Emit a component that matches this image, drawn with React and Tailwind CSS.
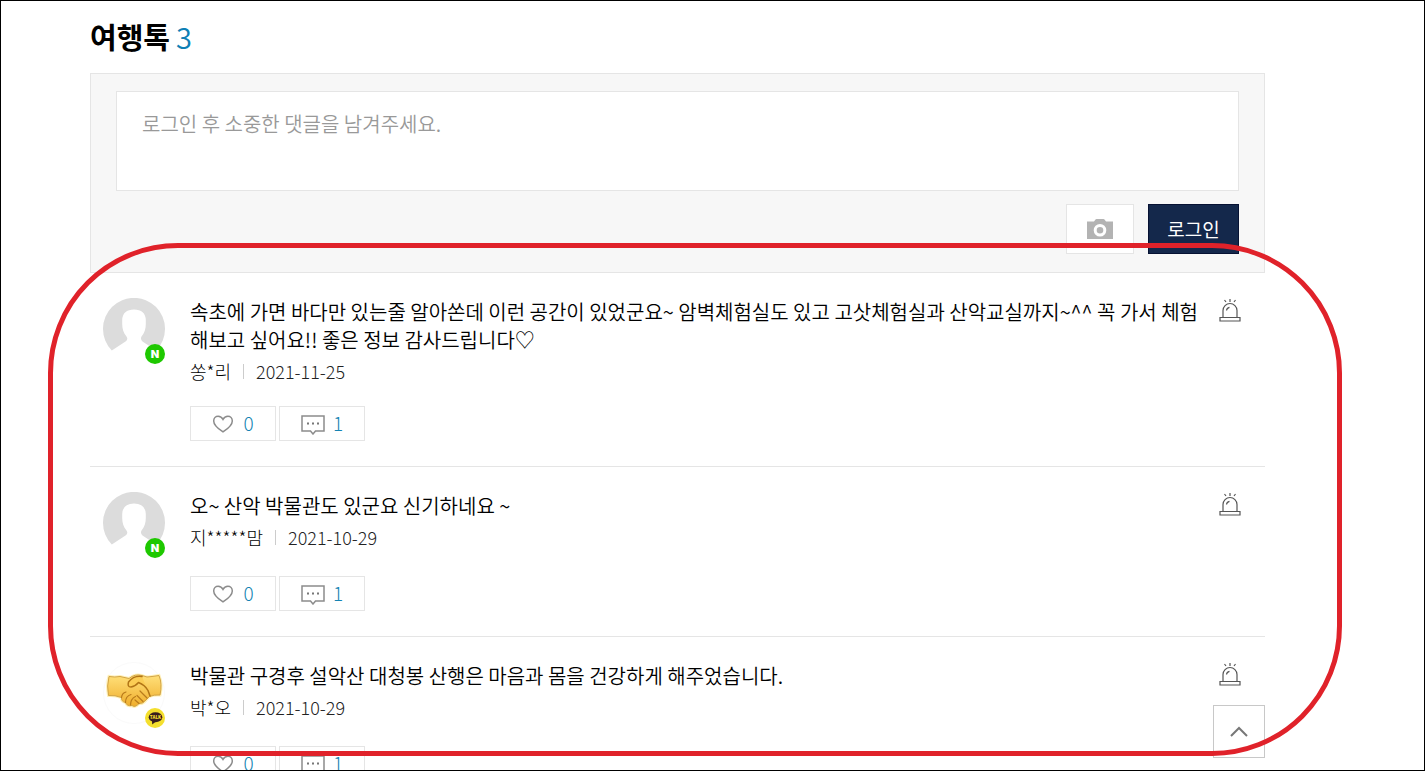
import { useState } from 'react';

const comments = [
    {
        id: 1,
        text: '속초에 가면 바다만 있는줄 알아쏜데 이런 공간이 있었군요~ 암벽체험실도 있고 고삿체험실과 산악교실까지~^^ 꼭 가서 체험해보고 싶어요!! 좋은 정보 감사드립니다♡',
        name: '쏭*리',
        date: '2021-11-25',
        provider: 'naver',
        likes: 0,
        replies: 1,
    },
    {
        id: 2,
        text: '오~ 산악 박물관도 있군요 신기하네요 ~',
        name: '지*****맘',
        date: '2021-10-29',
        provider: 'naver',
        likes: 0,
        replies: 1,
    },
    {
        id: 3,
        text: '박물관 구경후 설악산 대청봉 산행은 마음과 몸을 건강하게 해주었습니다.',
        name: '박*오',
        date: '2021-10-29',
        provider: 'kakao',
        likes: 0,
        replies: 1,
    },
];

function CameraIcon() {
    return (
        <svg className="w-[26px] h-5" viewBox="0 0 26 20" aria-hidden="true">
            <path d="M0 2.500h7l1.500-2Q8.900 0 9.500 0h7q.6 0 1 .5l1.500 2h7V20H0z" fill="#b3b3b3" />
            <circle cx="13" cy="11.300" r="4.800" fill="#b3b3b3" stroke="#fff" strokeWidth="3" />
        </svg>
    );
}

function HeartIcon() {
    return (
        <svg className="w-[22px] h-[19px]" viewBox="0 0 22 19" fill="none" stroke="#8c8c8c" strokeWidth="1.500" aria-hidden="true">
            <path d="M11 17.800C8.500 16.100 1.700 12 1.700 6.900 1.700 4 3.700 2.200 6.100 2.200c2.200 0 3.900 1.200 4.900 3.200 1-2 2.700-3.200 4.900-3.200 2.400 0 4.400 1.800 4.400 4.700 0 5.100-6.800 9.200-9.300 10.900z" />
        </svg>
    );
}

function ReplyIcon() {
    return (
        <svg className="w-6 h-[22px]" viewBox="0 0 24 22" fill="none" aria-hidden="true">
            <path d="M1 3h22v15h-8.500L12 21l-2.500-3H1z" stroke="#8c8c8c" strokeWidth="1.500" />
            <path d="M6 9.500h2v2H6zM11 9.500h2v2h-2zM16 9.500h2v2h-2z" fill="#777" />
        </svg>
    );
}

function SirenIcon() {
    return (
        <svg className="w-[22px] h-6" viewBox="0 0 22 24" fill="none" stroke="#555" strokeWidth="1.200" aria-hidden="true">
            <path d="M4 19.500V12.500a7 7 0 0 1 14 0v7" />
            <path d="M1 19.500h20v3.500H1z" />
            <path d="M7.500 12.500q.3-2.700 3-3.200M11 1v3M5.500 2l1.500 2M16.500 2L15 4" />
        </svg>
    );
}

function DefaultAvatar() {
    return (
        <svg className="w-[62px] h-[62px]" viewBox="0 0 62 62" aria-hidden="true">
            <path d="M8.800 52.500A31 31 0 1 1 53.200 52.500L39.500 43.500Q37 41.500 38.500 38.500C41.500 35 42.800 31 42.800 26V22Q42.300 11.500 31 11.500T19.200 22V26C19.200 31 20.500 35 23.500 38.500Q25.500 41.500 22.500 43.500Z" fill="#dcdcdc" />
        </svg>
    );
}

function HandshakeAvatar() {
    return (
        <svg className="w-[62px] h-[62px]" viewBox="0 0 62 62" aria-hidden="true">
            <defs>
                <linearGradient id="skin" x1="0" y1="0" x2="0" y2="1">
                    <stop offset="0" stopColor="#ffe07a" />
                    <stop offset="1" stopColor="#f0ae2c" />
                </linearGradient>
            </defs>
            <circle cx="31" cy="31" r="30.500" fill="#fff" stroke="#fafafa" />
            <path d="M6 14.500Q12 15.500 17 14.500L26 16.500Q32 11.500 39 13.500Q44 16 49 14.500L56 13.500Q59.500 22 57 33Q51 32.500 46.500 34.500L43 38Q40 42 36 41.500Q32 46 29 43.500Q24 44.500 22.500 40.500Q18 39.500 18.500 35.500Q12 33 5.500 33.500Q3.500 24 6 14.500Z" fill="url(#skin)" stroke="#fff0b8" strokeWidth="3" />
            <path d="M6 14.500Q12 15.500 17 14.500L26 16.500Q32 11.500 39 13.500Q44 16 49 14.500L56 13.500Q59.500 22 57 33Q51 32.500 46.500 34.500L43 38Q40 42 36 41.500Q32 46 29 43.500Q24 44.500 22.500 40.500Q18 39.500 18.500 35.500Q12 33 5.500 33.500Q3.500 24 6 14.500Z" fill="url(#skin)" stroke="#d2a445" strokeWidth="1" />
            <path d="M39 14.500Q31 13 25.500 20Q24 25 28 25Q32 24.500 35.500 20.500Q42 23 45 28.500L47 34" fill="#fbcd55" stroke="#b17416" strokeWidth="1.500" strokeLinecap="round" strokeLinejoin="round" />
            <path d="M18.500 35.500Q19 31 23 30M22.500 40.500Q22.500 34 28 32.500M27.500 43Q27.500 37 32.500 34.500M36 41.500L32 38M40 39.500L34 33.500M44 36L37 29" fill="none" stroke="#b97b1b" strokeWidth="1.200" strokeLinecap="round" />
        </svg>
    );
}

function ProviderBadge({ provider }) {
    if (provider === 'kakao') {
        return (
            <svg className="absolute right-0 -bottom-1 w-5 h-5" viewBox="0 0 20 20" role="img" aria-label="카카오톡">
                <circle cx="10" cy="10" r="10" fill="#f4df2e" />
                <ellipse cx="10.500" cy="9.300" rx="6.800" ry="5" fill="#371d1e" />
                <path d="M7 12.500L7.200 16.500L11 13.500Z" fill="#371d1e" />
                <text x="10.500" y="11" textAnchor="middle" fontSize="4.500" fontWeight="900" fill="#f4df2e">TALK</text>
            </svg>
        );
    }
    return (
        <svg className="absolute right-0 -bottom-1 w-5 h-5" viewBox="0 0 20 20" role="img" aria-label="네이버">
            <circle cx="10" cy="10" r="10" fill="#1ec800" />
            <text x="10" y="14" textAnchor="middle" fontFamily="Inter, sans-serif" fontSize="11" fontWeight="900" fill="#fff">N</text>
        </svg>
    );
}

function CommentItem({ comment }) {
    const [likes, setLikes] = useState(comment.likes);

    return (
        <li className="flex items-start py-[25px] border-b border-[#e5e5e5]">
            <div className="relative ml-[13px] mr-[25px] shrink-0">
                {comment.provider === 'kakao' ? <HandshakeAvatar /> : <DefaultAvatar />}
                <ProviderBadge provider={comment.provider} />
            </div>
            <div className="flex-1 min-w-0">
                <div className="min-h-16">
                    <p className="text-[20px] leading-7 text-black">{comment.text}</p>
                    <div className="flex items-center mt-[3px] pb-px text-[18px] leading-7 font-light text-[#222]">
                        <span className="text-black">{comment.name}</span>
                        <span className="w-px h-[15px] mx-3 bg-[#ccc]" />
                        <span>{comment.date}</span>
                    </div>
                </div>
                <div className="flex gap-[3px] mt-5 text-[19px] font-light text-[#1583b3]">
                    <button
                        type="button"
                        aria-label={`좋아요 ${likes}`}
                        onClick={() => setLikes(likes + 1)}
                        className="flex items-center justify-center gap-[9px] w-[86px] h-[35px] border border-[#e5e5e5] bg-white"
                    >
                        <HeartIcon />
                        <span>{likes}</span>
                    </button>
                    <button
                        type="button"
                        aria-label={`댓글 ${comment.replies}`}
                        className="flex items-center justify-center gap-2 w-[86px] h-[35px] border border-[#e5e5e5] bg-white"
                    >
                        <ReplyIcon />
                        <span>{comment.replies}</span>
                    </button>
                </div>
            </div>
            <button type="button" aria-label="신고" className="ml-3 mr-6 shrink-0">
                <SirenIcon />
            </button>
        </li>
    );
}

function App() {
    return (
        <div className="relative h-screen overflow-hidden border border-black bg-white pl-[89px] pr-[159px] font-['Noto_Sans_CJK_KR',sans-serif] font-[350]">
            <h2 className="flex gap-[6px] pt-[15px] text-[29px] leading-10 font-bold text-black">
                여행톡 <span className="font-[350] text-[#0f7fb5]">3</span>
            </h2>

            <form className="mt-[17px] px-[25px] pt-[17px] pb-[18px] border border-[#e5e5e5] bg-[#f7f7f7]" onSubmit={(e) => e.preventDefault()}>
                <textarea
                    aria-label="댓글"
                    placeholder="로그인 후 소중한 댓글을 남겨주세요."
                    className="block w-full h-[100px] px-[25px] py-[18px] border border-[#e5e5e5] bg-white text-[20px] leading-7 resize-none placeholder:text-[#999]"
                />
                <div className="flex justify-end gap-[14px] mt-[13px]">
                    <button type="button" aria-label="사진 첨부" className="flex items-center justify-center w-[68px] h-[50px] border border-[#e5e5e5] bg-white">
                        <CameraIcon />
                    </button>
                    <button type="submit" className="w-[91px] h-[50px] border border-[#071233] bg-[#14284b] text-[19px] font-normal text-white">
                        로그인
                    </button>
                </div>
            </form>

            <ul>
                {comments.map((comment) => (
                    <CommentItem key={comment.id} comment={comment} />
                ))}
            </ul>

            <button type="button" aria-label="맨 위로" className="absolute right-[159px] bottom-3 flex items-center justify-center w-[52px] h-[53px] border border-[#c8c8c8] bg-white">
                <svg className="w-[18px] h-[11px]" viewBox="0 0 18 11" fill="none" stroke="#777" strokeWidth="2" aria-hidden="true">
                    <path d="M1 10l8-8 8 8" />
                </svg>
            </button>

            {/* highlight around the comment list */}
            <div className="absolute left-[47px] right-[82px] top-[242px] bottom-[14px] rounded-[130px] border-5 border-[#e0222a] pointer-events-none" />
        </div>
    );
}

export default App;
